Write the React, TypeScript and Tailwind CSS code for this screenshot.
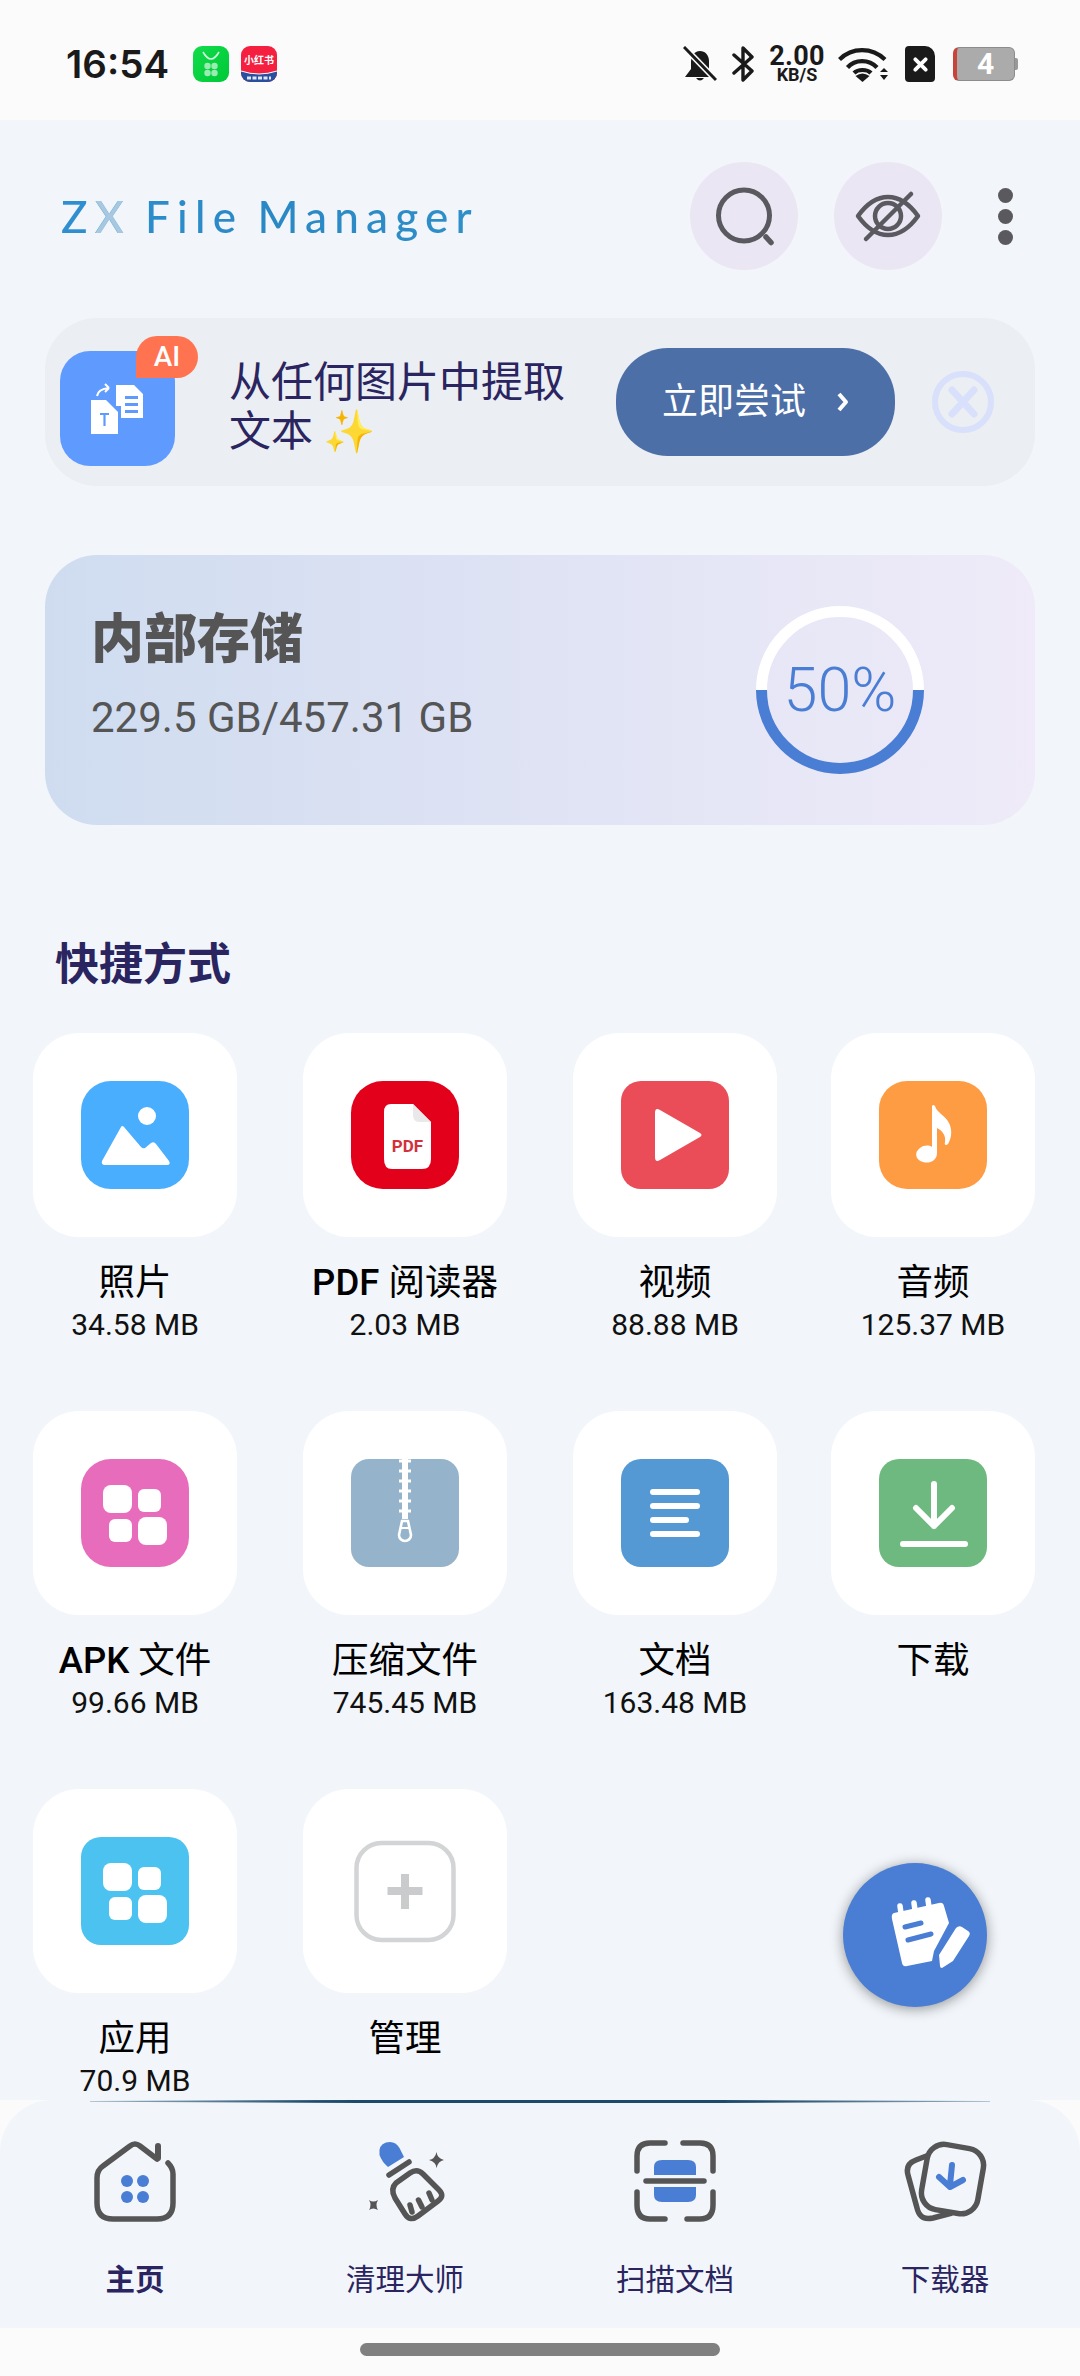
import type { ReactNode } from 'react';

const sans = "font-['Roboto','Noto_Sans_CJK_SC',sans-serif]";

const AppsGlyph = () => (
  <svg viewBox="0 0 108 108" className="w-full h-full" fill="#fff">
    <rect x="22" y="26" width="29" height="28" rx="8" />
    <rect x="57" y="30" width="23" height="23" rx="6" />
    <rect x="28" y="60" width="23" height="23" rx="6" />
    <rect x="57" y="58" width="29" height="28" rx="8" />
  </svg>
);

const PhotoGlyph = () => (
  <svg viewBox="0 0 108 108" className="w-full h-full" fill="#fff">
    <circle cx="66" cy="35" r="9" />
    <path d="M40 46 L21 80 Q20 84 24 84 L86 84 Q90 84 88 80 L75 63 Q73 60 70 62 L64 67 Q62 68 60 66 L43 46 Q41 44 40 46 Z" />
  </svg>
);

const PdfGlyph = () => (
  <svg viewBox="0 0 108 108" className="w-full h-full">
    <path d="M40 23 H62 L80 41 V78 Q80 88 71 88 H41 Q33 88 33 78 V31 Q33 23 40 23 Z" fill="#fff" />
    <path d="M62 23 L80 41 H68 Q62 41 62 34 Z" fill="#e9e9e9" />
    <text x="56.5" y="71" textAnchor="middle" fontFamily="Roboto, sans-serif" fontWeight="700" fontSize="17" fill="#d3313c">PDF</text>
  </svg>
);

const PlayGlyph = () => (
  <svg viewBox="0 0 108 108" className="w-full h-full" fill="#fff">
    <path d="M34 32 Q34 26 39 29 L79 52 Q82 54 79 56 L39 79 Q34 82 34 76 Z" />
  </svg>
);

const MusicGlyph = () => (
  <svg viewBox="0 0 108 108" className="w-full h-full" fill="#fff">
    <path d="M53 25 Q54 23 56 25 C58 32 66 34 70 42 C74 50 72 58 69 63 C67 65 65 64 66 61 C67 55 64 50 58 47 L58 72 C58 80 50 83 44 81 C36 79 35 71 41 67 C45 64 50 64 53 66 Z" />
  </svg>
);

const ZipGlyph = () => (
  <svg viewBox="0 0 108 108" className="w-full h-full" fill="none" stroke="#fff">
    <path d="M54 0 V60" strokeWidth="6" />
    <path d="M48 2 H60 M48 12 H60 M48 22 H60 M48 32 H60 M48 42 H60 M48 52 H60" strokeWidth="3" />
    <path d="M51 62 H57 L60 76 A6 6 0 1 1 48 76 Z" strokeWidth="2.6" />
    <path d="M50 69 H58" strokeWidth="2" />
  </svg>
);

const DocGlyph = () => (
  <svg viewBox="0 0 108 108" className="w-full h-full" fill="none" stroke="#fff" strokeWidth="6" strokeLinecap="round">
    <path d="M32 33 H76 M32 47 H76 M32 61 H65 M32 75 H76" />
  </svg>
);

const DownloadGlyph = () => (
  <svg viewBox="0 0 108 108" className="w-full h-full" fill="none" stroke="#fff" strokeWidth="6" strokeLinecap="round" strokeLinejoin="round">
    <path d="M55 25 V67 M37 49 L55 67 L73 49" />
    <path d="M24 85 H86" />
  </svg>
);

const AddGlyph = () => (
  <svg viewBox="0 0 108 108" className="w-full h-full" fill="none">
    <rect x="5.5" y="6" width="97" height="97" rx="25" stroke="#d2d4d6" strokeWidth="4.5" />
    <path d="M54 37 V72 M36.5 54 H71.5" stroke="#c9cbcd" strokeWidth="8" />
  </svg>
);

type Shortcut = { label: ReactNode; size?: string; tile?: string; glyph: ReactNode };

const shortcuts: Shortcut[] = [
  { label: '照片', size: '34.58 MB', tile: 'bg-[#4aaeff] rounded-[30px]', glyph: <PhotoGlyph /> },
  { label: <><b className="font-medium">PDF</b> 阅读器</>, size: '2.03 MB', tile: 'bg-[#e2001a] rounded-[32px]', glyph: <PdfGlyph /> },
  { label: '视频', size: '88.88 MB', tile: 'bg-[#ea4d57] rounded-[20px]', glyph: <PlayGlyph /> },
  { label: '音频', size: '125.37 MB', tile: 'bg-[#fe9c43] rounded-[28px]', glyph: <MusicGlyph /> },
  { label: <><b className="font-medium">APK</b> 文件</>, size: '99.66 MB', tile: 'bg-[#e86cbc] rounded-[30px]', glyph: <AppsGlyph /> },
  { label: '压缩文件', size: '745.45 MB', tile: 'bg-[#95b4cb] rounded-[18px]', glyph: <ZipGlyph /> },
  { label: '文档', size: '163.48 MB', tile: 'bg-[#5498d4] rounded-[20px]', glyph: <DocGlyph /> },
  { label: '下载', tile: 'bg-[#6eb980] rounded-[20px]', glyph: <DownloadGlyph /> },
  { label: '应用', size: '70.9 MB', tile: 'bg-[#4bc2ef] rounded-[20px]', glyph: <AppsGlyph /> },
  { label: '管理', glyph: <AddGlyph /> },
];

const ShortcutItem = ({ item }: { item: Shortcut }) => (
  <div className="w-[204px] h-[378px] flex flex-col items-center">
    <div className="w-[204px] h-[204px] rounded-[46px] bg-white flex items-center justify-center">
      <div className={`w-[108px] h-[108px] overflow-hidden ${item.tile ?? ''}`}>{item.glyph}</div>
    </div>
    <div className="mt-[24px] text-[36.5px] leading-[44px] text-black whitespace-nowrap">{item.label}</div>
    {item.size && <div className="text-[30px] leading-[40px] text-[#111] whitespace-nowrap">{item.size}</div>}
  </div>
);

const StatusBar = () => (
  <div className="h-[120px] bg-[#fbfbfb] flex items-center pl-[66px] pr-[62px] pt-[8px]">
    <span className="text-[38.5px] leading-none font-semibold text-[#1a1a1a] font-['Inter',sans-serif]">16:54</span>
    <div className="ml-[24px] w-[36px] h-[36px] rounded-[9px] bg-gradient-to-br from-[#12dc4c] to-[#00c936] flex items-center justify-center">
      <svg viewBox="0 0 36 36" className="w-full h-full">
        <path d="M10 6 Q18 20 26 6" fill="none" stroke="#d5f7df" strokeWidth="1.6" />
        <g fill="#9becb2">
          <circle cx="14.5" cy="20" r="3.2" /><circle cx="21.5" cy="20" r="3.2" />
          <circle cx="14.5" cy="27" r="3.2" /><circle cx="21.5" cy="27" r="3.2" />
        </g>
      </svg>
    </div>
    <div className="ml-[12px] w-[36px] h-[36px] rounded-[9px] overflow-hidden bg-[#f5203f] flex flex-col items-center">
      <span className="text-[10px] leading-[11px] mt-[8px] font-bold text-white font-['Noto_Sans_CJK_SC',sans-serif]">小红书</span>
      <svg viewBox="0 0 36 14" className="mt-auto w-full h-[14px]">
        <path d="M0 3 Q18 9 36 3 V14 H0 Z" fill="#2a4f9e" />
        <path d="M0 3 Q18 9 36 3" fill="none" stroke="#fff" strokeWidth="1" />
        <path d="M6 10 H30" stroke="#dfe6f5" strokeWidth="3" strokeDasharray="4 1.5" />
      </svg>
    </div>
    <div className="ml-auto flex items-center">
      <svg viewBox="0 0 34 36" className="w-[34px] h-[36px]">
        <path d="M17 5 C11 5 8 10 8 16 V23 L2 31 H30 L26 24 V15 C26 9 22 5 17 5 Z M13 32 Q17 37 21 32 Z" fill="#1a1a1a" />
        <path d="M2 2 L33 34" stroke="#fbfbfb" strokeWidth="6" />
        <path d="M1 1 L33 34" stroke="#1a1a1a" strokeWidth="3" />
      </svg>
      <svg viewBox="0 0 23 38" className="ml-[15px] w-[23px] h-[38px]" fill="none" stroke="#1a1a1a" strokeWidth="3.4" strokeLinecap="round" strokeLinejoin="round">
        <path d="M2 10 L20 26 L11 35 V3 L20 12 L2 28" />
      </svg>
      <div className="ml-[12px] w-[60px] flex flex-col items-center font-['Roboto',sans-serif] font-bold text-[#1a1a1a]">
        <span className="text-[27px] leading-[21px] tracking-[0.3px]">2.00</span>
        <span className="text-[18px] leading-[15px]">KB/S</span>
      </div>
      <svg viewBox="0 0 51 36" className="ml-[11px] w-[51px] h-[36px]" fill="none" stroke="#1a1a1a" strokeWidth="4.2">
        <path d="M1.5 13.5 C14 1 34 1 47 13.5 M9.5 21.5 C17 13 31 13 39 21.5 M16 27 C20 23 29 23 33 27" />
        <path d="M17.5 30 L24.5 36 L31.5 30 Q24.5 25 17.5 30 Z" fill="#1a1a1a" stroke="none" />
        <path d="M42 26 L46 22 L50 26 Z M42 29 L50 29 L46 34 Z" fill="#1a1a1a" stroke="none" />
      </svg>
      <div className="ml-[16px] w-[30px] h-[36px] bg-[#1a1a1a] rounded-[4px] rounded-tr-[10px] flex items-center justify-center">
        <svg viewBox="0 0 16 16" className="w-[15px] h-[15px]" stroke="#fff" strokeWidth="4" strokeLinecap="round"><path d="M2.5 2.5 L13.5 13.5 M13.5 2.5 L2.5 13.5" /></svg>
      </div>
      <div className="ml-[18px] flex items-center">
        <div className="w-[62px] h-[34px] rounded-[6px] bg-[#ababab] border border-[#8c8c8c] border-l-[4px] border-l-[#c8443a] flex items-center justify-center text-[30px] leading-none font-bold text-white font-['Roboto',sans-serif]">4</div>
        <div className="w-[3px] h-[12px] rounded-r-[2px] bg-[#999]" />
      </div>
    </div>
  </div>
);

const Header = () => (
  <div className="h-[108px] mt-[42px] flex items-center pl-[61px] pr-[67px]">
    <span className="text-[44px] leading-[60px] font-['Lato',sans-serif] tracking-[7.2px] [word-spacing:-4px] font-medium text-transparent bg-clip-text bg-gradient-to-r from-[#2f8fd0] via-[#2a88c4] to-[#2f8fc8] whitespace-nowrap">
      Z<span className="text-[#a8c7e0]">X</span> File Manager
    </span>
    <div className="ml-auto flex items-center gap-[36px]">
      <div className="w-[108px] h-[108px] rounded-full bg-[#ebe6f3] flex items-center justify-center">
        <svg viewBox="0 0 108 108" className="w-[108px] h-[108px]" fill="none" stroke="#59595f" strokeWidth="5" strokeLinecap="round">
          <circle cx="54" cy="53.5" r="25.5" />
          <path d="M76 75 L81 80.5" strokeWidth="5.5" />
        </svg>
      </div>
      <div className="w-[108px] h-[108px] rounded-full bg-[#ebe6f3] flex items-center justify-center">
        <svg viewBox="0 0 108 108" className="w-[108px] h-[108px]" fill="none" stroke="#59595f" strokeWidth="4.5" strokeLinecap="round" strokeLinejoin="round">
          <path d="M24 54 C34 40 44 35 54 35 C64 35 74 40 84 54 C74 68 64 73 54 73 C44 73 34 68 24 54 Z" />
          <circle cx="54" cy="54" r="13" />
          <path d="M32 77 L77 32" />
        </svg>
      </div>
    </div>
    <div className="ml-[56px] flex flex-col gap-[6px]">
      <span className="w-[15px] h-[15px] rounded-full bg-[#5a5a5e]" />
      <span className="w-[15px] h-[15px] rounded-full bg-[#5a5a5e]" />
      <span className="w-[15px] h-[15px] rounded-full bg-[#5a5a5e]" />
    </div>
  </div>
);

const PromoBanner = () => (
  <div className="mt-[48px] mx-[45px] h-[168px] rounded-[52px] bg-[#ebeef2] flex items-center pl-[15px]">
    <div className="relative w-[115px] h-[115px] rounded-[30px] bg-[#5f9bff] mt-[13px]">
      <svg viewBox="0 0 115 115" className="w-full h-full">
        <g transform="translate(0 -15)">
          <path d="M56 49 H74 L83 58 V82 H61 V70 H56 Z" fill="#fff" />
          <path d="M65 60 H78 V63 H65 Z M65 67 H78 V70 H65 Z M65 74 H78 V77 H65 Z" fill="#5f9bff" />
          <path d="M31 64 H46 L58 76 V98 H31 Z" fill="#fff" />
          <path d="M40 78 H49 M44.5 78 V90" stroke="#5f9bff" strokeWidth="2.2" fill="none" />
          <path d="M37 60 Q38 53 49 52 M49 52 L45 48 M49 52 L45 56" stroke="#fff" strokeWidth="2" fill="none" />
        </g>
      </svg>
      <div className="absolute left-[76px] top-[-15px] w-[62px] h-[42px] rounded-full rounded-bl-[22px] bg-[#ff7350] flex items-center justify-center text-[28px] leading-none font-medium text-white font-['Roboto',sans-serif]">AI</div>
    </div>
    <div className="ml-[54px] mt-[10px] w-[345px] text-[42px] leading-[49px] text-[#2a2560]">从任何图片中提取<br />文本 ✨</div>
    <div className="ml-[42px] w-[279px] h-[108px] rounded-[52px] bg-[#4d6fa8] flex items-center pl-[46px] text-[36px] text-white">
      立即尝试
      <svg viewBox="0 0 16 24" className="ml-[29px] w-[16px] h-[24px]" fill="none" stroke="#fff" strokeWidth="4" strokeLinejoin="round"><path d="M4 4 L11 12 L4 20" /></svg>
    </div>
    <svg viewBox="0 0 62 62" className="ml-[37px] w-[62px] h-[62px]" fill="none" stroke="#d8e0fb" strokeWidth="6">
      <circle cx="31" cy="31" r="28" />
      <path d="M20 19 L42 43 M42 19 L20 43" strokeLinecap="round" strokeWidth="7" />
    </svg>
  </div>
);

const StorageCard = () => (
  <div className="mt-[69px] mx-[45px] h-[270px] rounded-[52px] bg-gradient-to-r from-[#cfdcf0] via-[#dfe3f4] to-[#efebf9] flex items-start relative">
    <div className="pl-[46px] pt-[53px] flex flex-col">
      <div className="text-[53px] leading-[64px] font-black text-[#555]">内部存储</div>
      <div className="mt-[21px] text-[42px] leading-[50px] text-[#555] font-['Roboto',sans-serif]">229.5 GB/457.31 GB</div>
    </div>
    <div className="absolute left-[711px] top-[51px] w-[168px] h-[168px] flex items-center justify-center">
      <svg viewBox="0 0 168 168" className="absolute inset-0 w-full h-full" fill="none" strokeWidth="11">
        <path d="M5.5 84 A78.5 78.5 0 0 1 162.5 84" stroke="#fff" />
        <path d="M5.5 84 A78.5 78.5 0 0 0 162.5 84" stroke="#4a7dd4" />
      </svg>
      <span className="text-[61px] leading-none font-light text-[#4a7dd4] font-['Roboto',sans-serif]">50%</span>
    </div>
  </div>
);

const NavItem = ({ label, active, children }: { label: string; active?: boolean; children: ReactNode }) => (
  <div className="flex flex-col items-center">
    <div className="w-[90px] h-[82px]">{children}</div>
    <div className={`mt-[40px] text-[29.5px] leading-[36px] text-[#2a2560] ${active ? 'font-bold' : ''}`}>{label}</div>
  </div>
);

const BottomNav = () => (
  <div className="absolute left-0 right-0 top-[2100px] h-[228px] bg-[#fbfbfc]">
    <div className="h-full bg-[#f2f6fb] rounded-t-[52px] grid grid-cols-4 pt-[40px]">
      <NavItem label="主页" active>
        <svg viewBox="0 0 90 82" className="w-full h-full" fill="none" stroke="#555" strokeWidth="5.5" strokeLinecap="round" strokeLinejoin="round">
          <path d="M67 19 L50 6 Q45 2 40 6 L13 26 Q7 30 7 38 V63 Q7 79 23 79 H67 Q83 79 83 63 V34 Q83 28 78 23" />
          <path d="M68 6 V18" strokeWidth="6" />
          <g fill="#4a7dd4" stroke="none">
            <circle cx="37" cy="41" r="6" /><circle cx="53" cy="41" r="6" />
            <circle cx="37" cy="57" r="6" /><circle cx="53" cy="57" r="6" />
          </g>
        </svg>
      </NavItem>
      <NavItem label="清理大师">
        <svg viewBox="0 0 90 82" className="w-full h-full" fill="none">
          <path d="M19.5 15 Q18 5 26 2.5 Q35 0 39.5 8 L44 17 L28 27 Q22 22 19.5 15 Z" fill="#4a7dd4" />
          <path d="M29 35 L49 22" stroke="#555" strokeWidth="5.5" strokeLinecap="round" />
          <path d="M36 43 L50 33 Q57 28 63 34 L79 50 Q85 56 78 61 L58 76 Q50 82 45 74 L35 58 Q30 49 36 43 Z" stroke="#555" strokeWidth="5.5" />
          <path d="M50 65 L52 72 M58.5 60 L62 67 M69 53 L72 60" stroke="#555" strokeWidth="5.5" strokeLinecap="round" />
          <path d="M76.6 12 Q77 18 84 20 Q78 21 76.6 28 Q76 22 69 20 Q75 19 76.6 12 Z" fill="#555" />
          <path d="M9 60 Q13 63 18 60 Q15 65 18 70 Q13 67 9 70 Q12 65 9 60 Z" fill="#555" />
        </svg>
      </NavItem>
      <NavItem label="扫描文档">
        <svg viewBox="0 0 90 82" className="w-full h-full" fill="none" stroke="#555" strokeWidth="5.5" strokeLinecap="round">
          <path d="M7 31 V16 Q7 3 20 3 H35 M53 3 H70 Q83 3 83 16 V31 M7 52 V65 Q7 79 20 79 H35 M57 79 H70 Q83 79 83 65 V52" />
          <path d="M16 41 H74" />
          <path d="M24 35 V27 Q24 20 32 20 H58 Q66 20 66 27 V35 Z M24 47 H66 V55 Q66 62 58 62 H32 Q24 62 24 55 Z" fill="#4a7dd4" stroke="none" />
        </svg>
      </NavItem>
      <NavItem label="下载器">
        <svg viewBox="0 0 90 82" className="w-full h-full" fill="none" stroke="#555" strokeWidth="5.5" strokeLinejoin="round">
          <path d="M29 15 L16 20 Q5 24 8 35 L17 68 Q20 81 33 78 L52 73" />
          <rect x="24" y="6" width="57" height="66" rx="17" transform="rotate(10 52 39)" />
          <path d="M52 25 L50 45 M39 37 L50 47 L63 40" stroke="#4a7dd4" strokeWidth="6" strokeLinecap="round" />
        </svg>
      </NavItem>
    </div>
  </div>
);

export default function App() {
  return (
    <div className={`relative w-[1080px] h-[2376px] overflow-hidden bg-[#f2f6fa] ${sans}`}>
      <StatusBar />
      <Header />
      <PromoBanner />
      <StorageCard />
      <div className="mt-[115px] pl-[55px] text-[44px] leading-[50px] font-bold text-[#2a2560]">快捷方式</div>
      <div className="mt-[43px] pl-[33px] grid grid-cols-[270px_270px_258px_204px]">
        {shortcuts.map((item, i) => (
          <ShortcutItem key={i} item={item} />
        ))}
      </div>
      <button className="absolute left-[843px] top-[1863px] w-[144px] h-[144px] rounded-full bg-[#4a7dd4] shadow-[0_2px_13px_rgba(0,0,0,0.4)] flex items-center justify-center">
        <svg viewBox="0 0 144 144" className="w-full h-full" fill="#fff">
          <path d="M51 50 L96 40 Q100 39 101 43 L106 60 L91 88 L89 98 L64 103 Q60 104 59 100 L49 56 Q48 51 51 50 Z" />
          <path d="M58 50 L57 43 M72 47 L71 40 M86 44 L85 37" stroke="#fff" strokeWidth="5.5" strokeLinecap="round" fill="none" />
          <path d="M62 64 L78 60 M65 77 L88 71" stroke="#4a7dd4" strokeWidth="5" strokeLinecap="round" fill="none" />
          <path d="M113 65 Q116 62 119 64 L125 68 Q128 70 126 73 L110 98 L99 105 Q97 105 97 103 L96 92 Z" />
        </svg>
      </button>
      <BottomNav />
      <div className="absolute left-[90px] top-[2100px] w-[900px] h-[3px] bg-[linear-gradient(to_right,#9fb7c7,#1e4a6b_25%,#1e4a6b_75%,#9fb7c7)] [clip-path:polygon(0_30%,30%_0,70%_0,100%_30%,100%_60%,70%_100%,30%_100%,0_60%)]" />
      <div className="absolute left-0 right-0 top-[2328px] h-[48px] bg-[#fbfbfb] flex justify-center pt-[15px]">
        <div className="w-[360px] h-[13px] rounded-full bg-[#808080]" />
      </div>
    </div>
  );
}
